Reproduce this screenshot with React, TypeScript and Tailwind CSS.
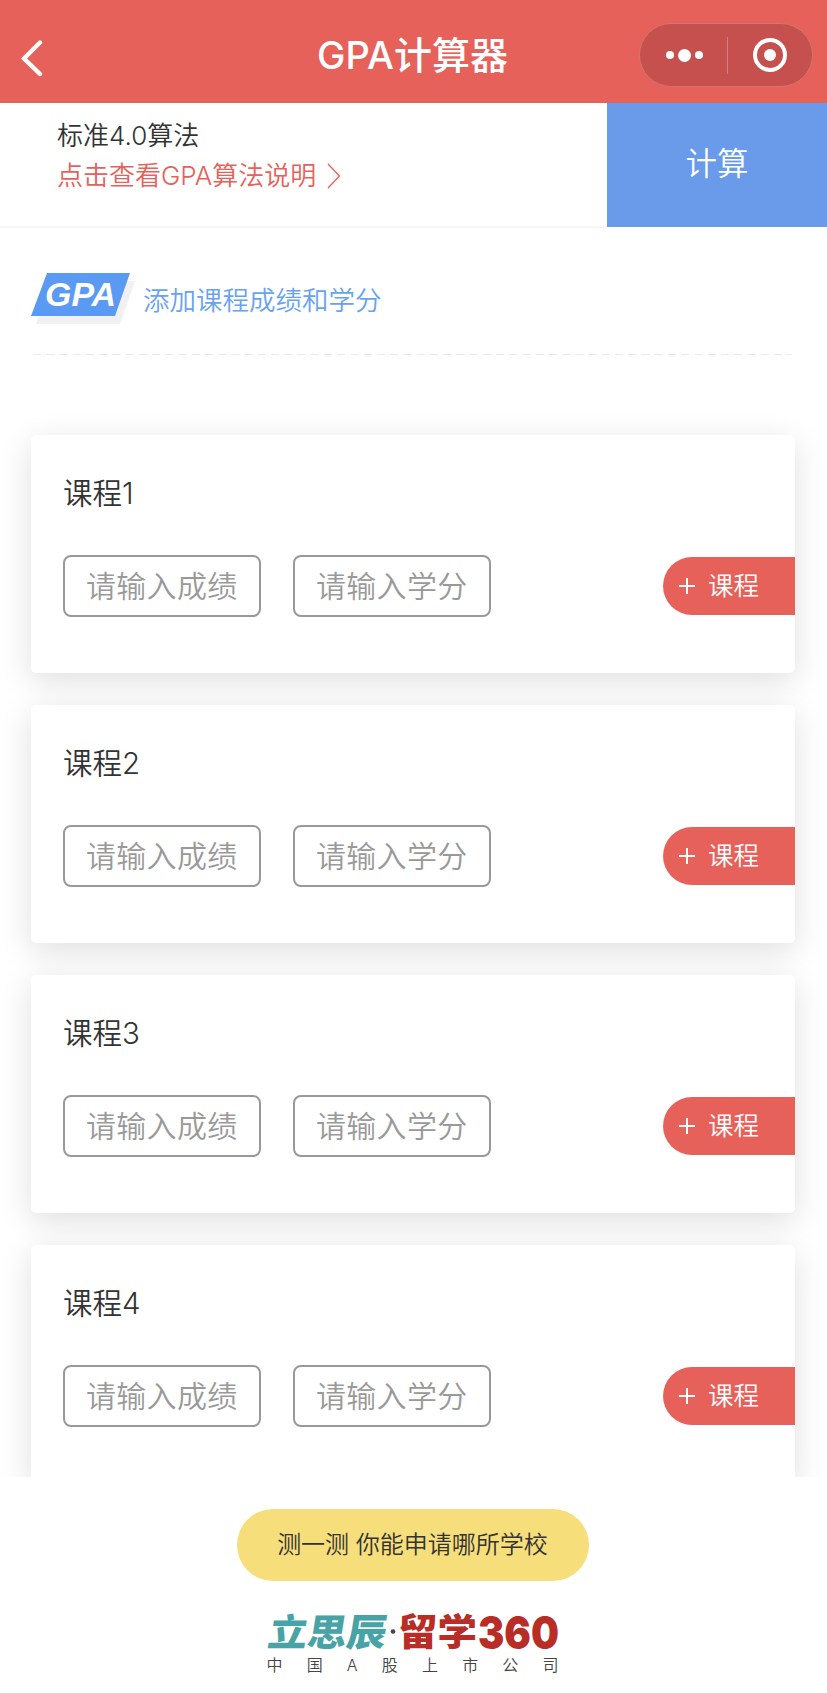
import { useState } from 'react'

interface Course {
  id: number
  name: string
}

const courses: Course[] = [
  { id: 1, name: '课程1' },
  { id: 2, name: '课程2' },
  { id: 3, name: '课程3' },
  { id: 4, name: '课程4' },
]

const companyLine = ['中', '国', 'A', '股', '上', '市', '公', '司']

function Header() {
  return (
    <header className="flex h-[103px] shrink-0 items-center justify-between bg-[#e7615b] pr-[14px] pl-[21px]">
      <button className="w-[165px] pt-[13px]" aria-label="返回">
        <svg width="24" height="38" viewBox="0 0 24 38" fill="none" stroke="#fff" strokeWidth="4.4" strokeLinecap="round">
          <path d="M19 3.5 3 19.5 19 35" strokeLinejoin="miter" />
        </svg>
      </button>

      <h1 className="mt-[7px] text-[38px] leading-[50px] font-medium whitespace-nowrap text-white">
        GPA计算器
      </h1>

      {/* Capsule menu */}
      <div className="mt-[7px] flex h-[64px] w-[174px] items-center rounded-full border border-[#d3746f] bg-[#c5504d]">
        <button className="flex w-[87px] items-center justify-center gap-1 pl-[3px]" aria-label="更多">
          <span className="h-2 w-2 rounded-full bg-white" />
          <span className="h-[13px] w-[13px] rounded-full bg-white" />
          <span className="h-2 w-2 rounded-full bg-white" />
        </button>
        <div className="h-[37px] w-px bg-[#d67e7b]" />
        <button className="flex flex-1 items-center justify-center" aria-label="关闭">
          <span className="flex h-[34px] w-[34px] items-center justify-center rounded-full border-4 border-white">
            <span className="h-3 w-3 rounded-full bg-white" />
          </span>
        </button>
      </div>
    </header>
  )
}

function AlgorithmBar() {
  return (
    <section className="flex h-[124px] shrink-0">
      <div className="h-[125px] flex-1 border-b-2 border-[#f7f7f7] pt-[13px] pl-[57px] text-[26px] leading-[40px]">
        <p className="text-[#333]">标准4.0算法</p>
        <a className="flex items-center text-[#e7615b]">
          点击查看GPA算法说明
          <svg className="ml-[11px]" width="14" height="26" viewBox="0 0 14 26" fill="none" stroke="currentColor" strokeWidth="1.3">
            <path d="M1 1 12.5 13 1 25" />
          </svg>
        </a>
      </div>
      <button className="w-[220px] bg-[#6a9bea] pb-[2px] text-[31.5px] text-white">计算</button>
    </section>
  )
}

function SectionTitle() {
  return (
    <div className="mx-[31px] flex h-[81px] items-start">
      <svg width="105" height="51" viewBox="0 0 105 51">
        <path d="M21 8h83L89 51H5z" fill="#f1f1f1" />
        <path d="M16 0h83L84 43H0z" fill="#5b9af3" />
        <text
          x="14"
          y="32.5"
          fill="#fff"
          fontFamily="Liberation Sans, sans-serif"
          fontSize="34"
          fontWeight="700"
          fontStyle="italic"
          textLength="71"
          lengthAdjust="spacingAndGlyphs"
        >
          GPA
        </text>
      </svg>
      <h2 className="mt-[7px] ml-[7px] text-[26.5px] leading-[40px] text-[#68a2f3]">添加课程成绩和学分</h2>
    </div>
  )
}

interface CourseCardProps {
  course: Course
}

function CourseCard({ course }: CourseCardProps) {
  const [score, setScore] = useState('')
  const [credit, setCredit] = useState('')

  const inputClass =
    'h-[62px] w-[198px] rounded-lg border-2 border-[#999] bg-transparent pl-[21px] text-[30px] tracking-[0.3px] text-[#333] outline-none placeholder:text-[#999]'

  return (
    <div className="h-[238px] shrink-0 rounded-[5px] bg-white pt-[35px] pl-[32px] shadow-[0_8px_32px_rgba(0,0,0,0.13)]">
      <h3 className="text-[29.5px] leading-[46px] text-[#333]">{course.name}</h3>
      <div className="mt-[39px] flex items-center">
        <input className={inputClass} placeholder="请输入成绩" value={score} onChange={(e) => setScore(e.target.value)} />
        <input
          className={`ml-8 ${inputClass}`}
          placeholder="请输入学分"
          value={credit}
          onChange={(e) => setCredit(e.target.value)}
        />
        <button className="ml-auto flex h-[58px] w-[132px] items-center rounded-l-full bg-[#e7615b] pl-4 text-[25.5px] text-white">
          <svg width="16" height="16" viewBox="0 0 16 16" stroke="currentColor" strokeWidth="2">
            <path d="M8 0v16M0 8h16" />
          </svg>
          <span className="ml-[13px] leading-[40px]">课程</span>
        </button>
      </div>
    </div>
  )
}

function Footer() {
  return (
    <footer className="flex h-[216px] shrink-0 flex-col items-center bg-white pt-8 pr-[2px]">
      <button className="h-[72px] w-[352px] rounded-full bg-[#f6de7b] text-[24px] whitespace-nowrap text-[#333]">
        测一测 你能申请哪所学校
      </button>

      {/* Brand */}
      <svg
        className="mt-[30px] overflow-visible"
        width="290"
        height="40"
        viewBox="0 0 290 40"
        fontFamily="Noto Sans CJK SC, sans-serif"
        fontWeight="900"
      >
        <g transform="translate(5 0) skewX(-9)" fill="#48a3a7">
          <text x="-1" y="34.5" fontSize="37.5" textLength="118" lengthAdjust="spacingAndGlyphs">
            立思辰
          </text>
        </g>
        <circle cx="125" cy="20.5" r="2.3" fill="#444" />
        <g fill="#b92d27">
          <text x="130" y="34.5" fontSize="37" textLength="79" lengthAdjust="spacingAndGlyphs">
            留学
          </text>
          <text x="210" y="37.5" fontFamily="Inter, sans-serif" fontSize="46" textLength="81" lengthAdjust="spacingAndGlyphs">
            360
          </text>
        </g>
      </svg>
      <div className="mt-[2px] flex w-[292px] justify-between text-[16px] leading-[24px] text-[#444]">
        {companyLine.map((char) => (
          <span key={char}>{char}</span>
        ))}
      </div>
    </footer>
  )
}

export default function App() {
  return (
    <div className="flex h-[1693px] w-[827px] flex-col overflow-hidden bg-white font-['Inter','Noto_Sans_CJK_SC',sans-serif] font-[350]">
      <Header />
      <AlgorithmBar />

      <main className="min-h-0 flex-1 overflow-hidden pt-[46px]">
        <SectionTitle />
        <svg className="ml-[33px] block" width="758" height="1">
          <path d="M0 .5h758" stroke="#e9e9e9" strokeDasharray="8 5.23" />
        </svg>
        <div className="mx-[31px] mt-[80px] flex flex-col gap-8 pr-[1px]">
          {courses.map((course) => (
            <CourseCard key={course.id} course={course} />
          ))}
        </div>
      </main>

      <Footer />
    </div>
  )
}
